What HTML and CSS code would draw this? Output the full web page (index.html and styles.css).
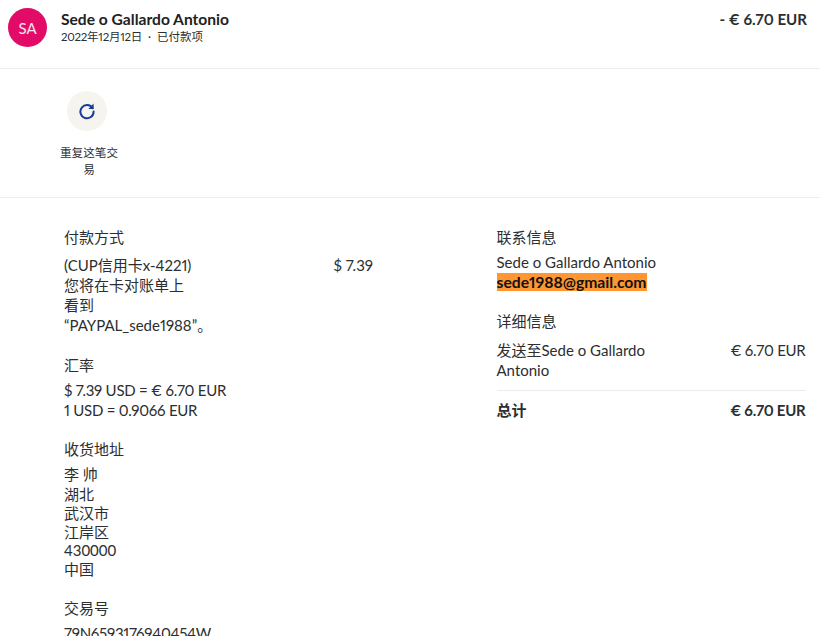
FILE: index.html
```html
<!DOCTYPE html>
<html lang="zh-CN">
<head>
    <meta charset="UTF-8">
    <meta name="viewport" content="width=device-width, initial-scale=1.0">
    <title>交易详情</title>
    <link rel="stylesheet" href="styles.css">
</head>
<body>
    <div class="summary">
        <div class="avatar">SA</div>
        <div class="summary-text">
            <div class="summary-name">Sede o Gallardo Antonio</div>
            <div class="summary-meta"><span class="summary-date">2022年12月12日</span><span class="summary-dot">·</span>已付款项</div>
        </div>
        <div class="summary-amount">- € 6.70 EUR</div>
    </div>

    <div class="actions">
        <div class="action">
            <div class="action-icon">
                <svg width="18" height="18" viewBox="0 0 18 18" fill="none">
                    <path d="M14.6 6.2A6.6 6.6 0 1 0 15.6 9.6" stroke="#1a3a9c" stroke-width="2" stroke-linecap="round"/>
                    <path d="M15.6 1.6V7H10.4Z" fill="#1a3a9c"/>
                </svg>
            </div>
            <div class="action-label">重复这笔交易</div>
        </div>
    </div>

    <div class="details">
        <div class="col-left">
            <div class="section">
                <h3>付款方式</h3>
                <div class="pay-row">
                    <div class="pay-text">(CUP信用卡x-4221)<br>您将在卡对账单上看到“PAYPAL_sede1988”。</div>
                    <div>$ 7.39</div>
                </div>
            </div>
            <div class="section">
                <h3>汇率</h3>
                <div class="tight">$ 7.39 USD = € 6.70 EUR<br>1 USD = 0.9066 EUR</div>
            </div>
            <div class="section">
                <h3>收货地址</h3>
                <div class="addr-name">李 帅</div>
                <div class="addr">湖北<br>武汉市<br>江岸区<br>430000<br>中国</div>
            </div>
            <div class="section">
                <h3>交易号</h3>
                <div class="tight">79N6593176940454W</div>
            </div>
        </div>

        <div class="col-right">
            <div class="section">
                <h3>联系信息</h3>
                <div>Sede o Gallardo Antonio<br><mark class="email">sede1988@gmail.com</mark></div>
            </div>
            <div class="section">
                <h3>详细信息</h3>
                <div class="line-row">
                    <div class="line-name">发送至Sede o Gallardo Antonio</div>
                    <div class="tight">€ 6.70 EUR</div>
                </div>
                <div class="total-row">
                    <div>总计</div>
                    <div class="tight">€ 6.70 EUR</div>
                </div>
            </div>
        </div>
    </div>
</body>
</html>
```
FILE: styles.css
```css
* { margin: 0; padding: 0; box-sizing: border-box; }

html, body {
    height: 636px;
    overflow: hidden;
}

body {
    font-family: Lato, "Noto Sans CJK SC", sans-serif;
    font-size: 15px;
    line-height: 20px;
    font-variant-numeric: proportional-nums;
    color: #2c2e2f;
    background: white;
}

.tight {
    letter-spacing: -0.25px;
}

.summary {
    height: 69px;
    display: flex;
    padding: 8px 13px 0 8px;
    border-bottom: 1px solid #eaeced;
}

.avatar {
    width: 39px;
    height: 39px;
    border-radius: 50%;
    background: #e20b68;
    color: #fbe3ee;
    font-size: 15px;
    display: flex;
    align-items: center;
    justify-content: center;
}

.summary-text {
    flex: 1;
    margin-left: 14px;
    padding-top: 2px;
}

.summary-name {
    font-weight: 700;
    font-size: 15.6px;
    line-height: 18px;
    color: #1f2122;
}

.summary-meta {
    font-size: 11.5px;
    line-height: 18px;
}

.summary-date {
    letter-spacing: -0.25px;
}

.summary-dot {
    margin: 0 6px;
}

.summary-amount {
    font-weight: 700;
    font-size: 15.1px;
    line-height: 20px;
    padding-top: 1px;
}

.actions {
    height: 129px;
    padding: 22px 0 0 59px;
    border-bottom: 1px solid #eaeced;
}

.action {
    width: 60px;
    text-align: center;
}

.action-icon {
    width: 40px;
    height: 40px;
    margin: 0 0 13px 8px;
    border-radius: 50%;
    background: #f5f4ef;
    display: flex;
    align-items: center;
    justify-content: center;
}

.action-label {
    font-size: 11.6px;
    line-height: 17px;
}

.details {
    display: flex;
    padding: 29px 14px 0 64px;
}

.col-left {
    width: 309px;
}

.col-right {
    width: 309px;
    margin-left: 123.5px;
}

.section {
    margin-bottom: 19px;
}

h3 {
    font-size: 15px;
    font-weight: 400;
    line-height: 20px;
    margin-bottom: 5px;
}

.pay-row {
    display: flex;
    justify-content: space-between;
    margin-top: 8px;
    margin-bottom: 20px;
}

.pay-text {
    width: 132px;
}

.addr-name {
    margin-bottom: 1px;
}

.addr {
    line-height: 18.75px;
    font-variant-numeric: tabular-nums;
}

.email {
    background: #ff9632;
    color: #111;
    font-weight: 700;
    font-size: 15.7px;
}

.line-row {
    display: flex;
    justify-content: space-between;
    margin-top: 9px;
    padding-bottom: 10px;
    border-bottom: 1px solid #eaeced;
}

.line-name {
    width: 170px;
}

.total-row {
    display: flex;
    justify-content: space-between;
    padding-top: 9px;
    font-weight: 700;
}
```
